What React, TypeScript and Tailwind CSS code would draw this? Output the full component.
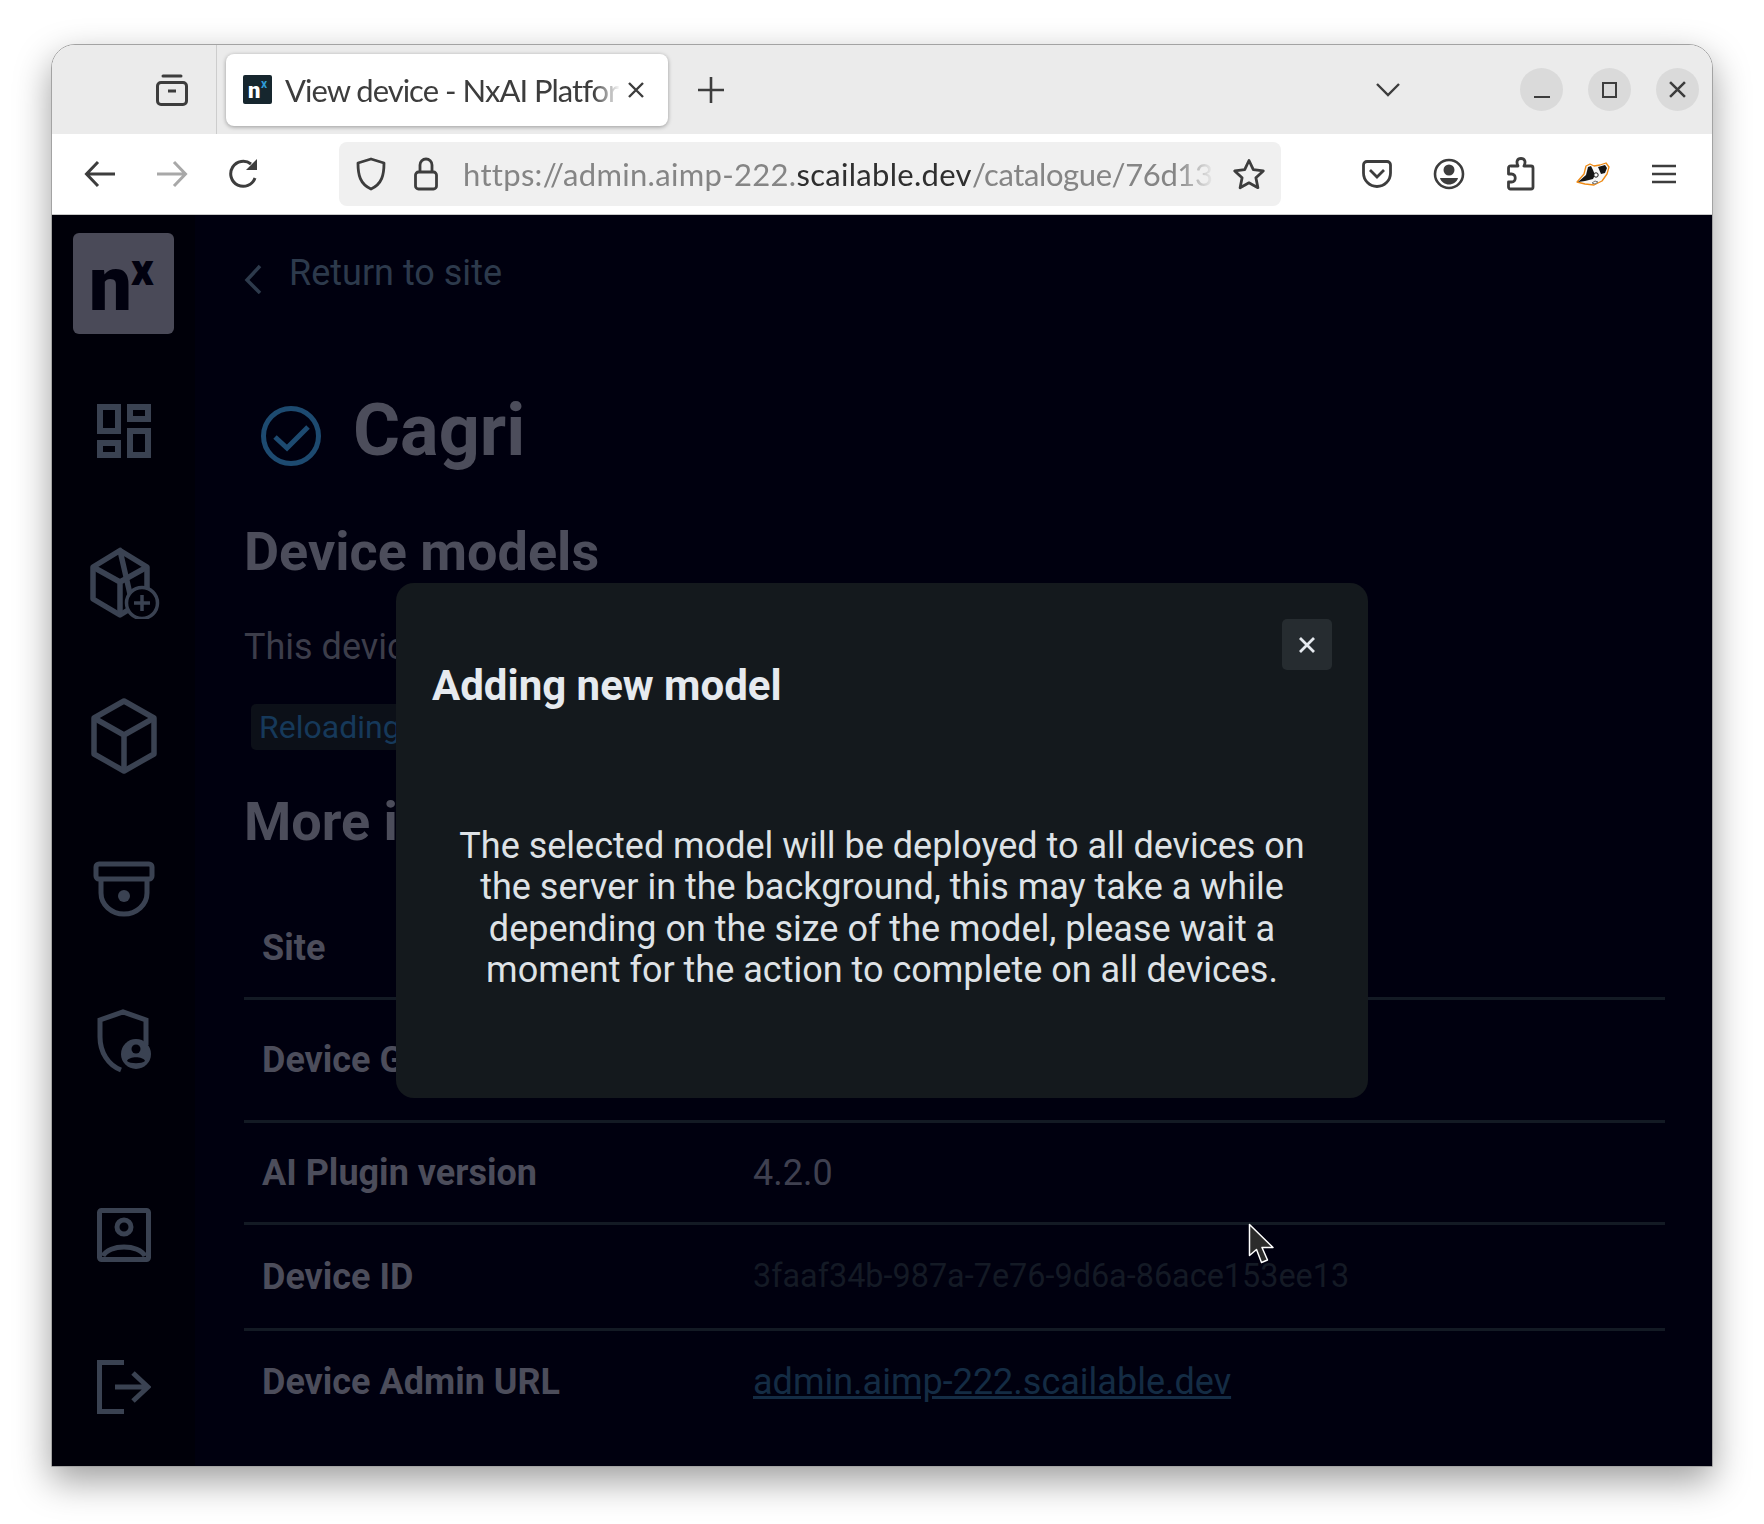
import { MdOutlineDashboard } from "react-icons/md";

const roboto = "font-['Roboto',sans-serif]";
const chrome = "font-['Lato',sans-serif]";

function ToolSlot({ children }: { children: React.ReactNode }) {
	return <div className="flex items-center justify-center w-[72px] h-[64px] shrink-0">{children}</div>;
}

function TitleBar() {
	return (
		<div className="flex items-center h-[89px] shrink-0 bg-[#ebebeb] pr-[13px] text-[#3d3d3d]">
			<div className="flex items-center justify-end w-[165px] h-full shrink-0 border-r border-[#cdcdcd] pr-[27px]">
				<svg width="34" height="34" viewBox="0 0 34 34" fill="none" stroke="currentColor" strokeWidth="3">
					<path d="M8 3h18" strokeLinecap="round" />
					<rect x="2.5" y="9.5" width="29" height="22" rx="3.5" />
					<path d="M13 18h8" />
				</svg>
			</div>
			<div className="flex items-center ml-[9px] w-[442px] h-[72px] shrink-0 rounded-[8px] bg-white shadow-[0_1px_4px_rgba(0,0,0,0.35)] pl-[17px] pr-[23px]">
				<div className="relative w-[29px] h-[29px] shrink-0 rounded-[2px] bg-[#16262e]">
					<span className={`absolute left-[5px] top-[5px] text-[22px] leading-[22px] font-black text-white ${roboto}`}>n</span>
					<span className={`absolute left-[18px] top-[3px] text-[12px] leading-[12px] font-bold text-[#2f9bd8] ${roboto}`}>x</span>
				</div>
				<span className={`ml-[13px] w-[335px] overflow-hidden whitespace-nowrap text-[31px] leading-[40px] tracking-[-1px] text-[#3d3d3d] [mask-image:linear-gradient(to_right,black_92%,transparent)] ${chrome}`}>
					View device - NxAI Platfor
				</span>
				<svg className="ml-auto shrink-0" width="18" height="18" viewBox="0 0 18 18" stroke="currentColor" strokeWidth="2.4">
					<path d="M2 2l14 14M16 2L2 16" />
				</svg>
			</div>
			<div className="flex items-center justify-center ml-[18px] w-[50px] shrink-0">
				<svg width="26" height="26" viewBox="0 0 26 26" stroke="currentColor" strokeWidth="2.6">
					<path d="M13 0v26M0 13h26" />
				</svg>
			</div>
			<svg className="ml-auto mr-[120px] shrink-0" width="24" height="14" viewBox="0 0 24 14" fill="none" stroke="currentColor" strokeWidth="2.4">
				<path d="M1 1l11 11L23 1" />
			</svg>
			<div className="flex items-center gap-[25px] shrink-0">
				<div className="flex items-center justify-center w-[43px] h-[43px] rounded-full bg-[#dadada]">
					<div className="w-[16px] h-[2px] mt-[14px] bg-[#3d3d3d]" />
				</div>
				<div className="flex items-center justify-center w-[43px] h-[43px] rounded-full bg-[#dadada]">
					<div className="w-[15px] h-[16px] border-[2px] border-[#3d3d3d]" />
				</div>
				<div className="flex items-center justify-center w-[43px] h-[43px] rounded-full bg-[#dadada]">
					<svg width="17" height="17" viewBox="0 0 16 16" stroke="currentColor" strokeWidth="2.4">
						<path d="M1 1l14 14M15 1L1 15" />
					</svg>
				</div>
			</div>
		</div>
	);
}

function Badger() {
	return (
		<svg width="34" height="25" viewBox="0 0 34 25">
			<path d="M1 20l7-8 2-8 4-2 4 2 6-1 6-2 3 4-2 7-5 7-8 4-9-1z" fill="#f8f8f8" stroke="#f08a12" strokeWidth="1.3" strokeLinejoin="round" />
			<path d="M2 20l8-7 2-8 3-1 2 4 2 5-2 4-8 2z" fill="#151515" />
			<path d="M22 5l7-2 2 3-2 5-4 1z" fill="#151515" />
			<circle cx="20" cy="13" r="2.2" fill="#fff" stroke="#151515" />
			<path d="M16 21l3-2 3 1-3 2z" fill="none" stroke="#777" strokeWidth="1" />
		</svg>
	);
}

function Toolbar() {
	return (
		<div className="flex items-center h-[81px] shrink-0 bg-white pl-[12px] border-b border-[#c9c9c9] text-[#3d3d3d]">
			<ToolSlot>
				<svg width="32" height="28" viewBox="0 0 32 28" fill="none" stroke="currentColor" strokeWidth="3">
					<path d="M31 14H3M14 2L2.5 14 14 26" />
				</svg>
			</ToolSlot>
			<ToolSlot>
				<svg width="32" height="28" viewBox="0 0 32 28" fill="none" stroke="#a8a8a8" strokeWidth="3">
					<path d="M1 14h28M18 2l11.5 12L18 26" />
				</svg>
			</ToolSlot>
			<ToolSlot>
				<svg width="32" height="32" viewBox="0 0 32 32" fill="none" stroke="currentColor" strokeWidth="3">
					<path d="M27 20a12.5 12.5 0 1 1-4-14" />
					<path d="M29 1v11H18z" fill="currentColor" stroke="none" />
				</svg>
			</ToolSlot>
			<div className="flex items-center ml-[59px] w-[942px] h-[64px] shrink-0 rounded-[8px] bg-[#f0f0f0] pl-[17px] pr-[15px]">
				<svg className="shrink-0" width="30" height="34" viewBox="0 0 30 34" fill="none" stroke="currentColor" strokeWidth="2.8">
					<path d="M15 2l13 4c0 12-2 21-13 26C4 27 2 18 2 6z" strokeLinejoin="round" />
				</svg>
				<svg className="ml-[28px] shrink-0" width="24" height="34" viewBox="0 0 24 34" fill="none" stroke="currentColor" strokeWidth="2.8">
					<path d="M6 15V8a6 6 0 0 1 12 0v7" />
					<rect x="1.5" y="15" width="21" height="17" rx="3" />
				</svg>
				<div className={`ml-[25px] w-[752px] overflow-hidden whitespace-nowrap text-[31px] leading-[40px] tracking-[0.3px] text-[#858585] [mask-image:linear-gradient(to_right,black_95%,transparent)] ${chrome}`}>
					https://admin.aimp-222.<span className="text-[#2f2f2f]">scailable.dev</span><span className="tracking-[-0.4px]">/catalogue/76d13</span>
				</div>
				<svg className="ml-auto shrink-0" width="34" height="32" viewBox="0 0 34 32" fill="none" stroke="currentColor" strokeWidth="2.8">
					<path d="M17 2.5l4.3 9.2 10 1.2-7.4 6.9 2 9.9L17 24.8 8.1 29.7l2-9.9-7.4-6.9 10-1.2z" strokeLinejoin="round" />
				</svg>
			</div>
			<div className="flex items-center ml-[60px]">
				<ToolSlot>
					<svg width="30" height="28" viewBox="0 0 30 28" fill="none" stroke="currentColor" strokeWidth="2.8">
						<path d="M5 1.5h20A3.5 3.5 0 0 1 28.5 5v8a13.5 13.5 0 0 1-27 0V5A3.5 3.5 0 0 1 5 1.5z" />
						<path d="M8 10l7 7 7-7" />
					</svg>
				</ToolSlot>
				<ToolSlot>
					<svg width="32" height="32" viewBox="0 0 32 32" fill="none" stroke="currentColor" strokeWidth="2.6">
						<circle cx="16" cy="16" r="14" />
						<circle cx="16" cy="12" r="5.5" fill="currentColor" stroke="none" />
						<path d="M7 20h18c-1 4-5 6.5-9 6.5S8 24 7 20z" fill="currentColor" stroke="none" />
					</svg>
				</ToolSlot>
				<ToolSlot>
					<svg width="28" height="34" viewBox="0 0 28 34" fill="none" stroke="currentColor" strokeWidth="2.8" strokeLinejoin="round">
						<path d="M4 9h7c-2-4-1-7.5 3-7.5s5 3.5 3 7.5h7a2 2 0 0 1 2 2v19a2 2 0 0 1-2 2H3.5a2 2 0 0 1-2-2v-5h3c5 0 5-8 0-8h-3v-6A2 2 0 0 1 4 9z" />
					</svg>
				</ToolSlot>
				<ToolSlot>
					<Badger />
				</ToolSlot>
				<div className="flex items-center justify-center w-[70px] h-[64px] shrink-0">
					<svg width="24" height="20" viewBox="0 0 24 20" stroke="currentColor" strokeWidth="2.4">
						<path d="M0 2h24M0 10h24M0 18h24" />
					</svg>
				</div>
			</div>
		</div>
	);
}

function CubeIcon() {
	return (
		<svg width="72" height="72" viewBox="0 0 72 72" fill="none" stroke="#3a4252" strokeWidth="5.5" strokeLinejoin="round">
			<path d="M32 3.500L59 20v24M45 60L32 68 5 52V20L32 3.500z" />
			<path d="M5 20l27 15 27-15M32 35v33" />
			<circle cx="54" cy="56" r="15.500" fill="#000009" strokeWidth="3.500" />
			<path d="M54 48v16M46 56h16" strokeWidth="3.500" />
		</svg>
	);
}

function Sidebar() {
	return (
		<aside className="flex flex-col items-center w-[143px] shrink-0 bg-[#000009] pt-[18px] text-[#3a4252]">
			<div className="relative w-[101px] h-[101px] shrink-0 rounded-[6px] bg-[#4a4a58]">
				<span className={`absolute left-[16px] top-[13px] text-[76px] leading-[76px] font-black text-[#01010f] ${roboto}`}>n</span>
				<span className={`absolute left-[58px] top-[15px] text-[44px] leading-[44px] font-black text-[#01010f] ${roboto}`}>x</span>
			</div>
			<MdOutlineDashboard className="mt-[61px] shrink-0" size={72} />
			<div className="mt-[80px]">
				<CubeIcon />
			</div>
			<svg className="mt-[79px] shrink-0" width="68" height="76" viewBox="0 0 68 76" fill="none" stroke="currentColor" strokeWidth="5.5" strokeLinejoin="round">
				<path d="M34 3l30 17v36L34 73 4 56V20z" />
				<path d="M4 20l30 17 30-17M34 37v36" />
			</svg>
			<svg className="mt-[87px] shrink-0" width="62" height="56" viewBox="0 0 62 56" fill="none" stroke="currentColor" strokeWidth="5">
				<rect x="3" y="3" width="56" height="15" rx="3" />
				<path d="M8 18v14a23 21 0 0 0 46 0V18" />
				<circle cx="31" cy="35" r="6" fill="currentColor" stroke="none" />
			</svg>
			<svg className="mt-[92px] shrink-0" width="56" height="64" viewBox="0 0 56 64" fill="none">
				<path d="M50 36V11L27 3 4 11v17c0 15 8 28 21 33" stroke="currentColor" strokeWidth="5" />
				<circle cx="40" cy="45" r="15" fill="currentColor" />
				<circle cx="40" cy="40" r="4.500" fill="#000009" />
				<path d="M31 52c2-5 16-5 18 0-3 3-15 3-18 0z" fill="#000009" />
			</svg>
			<svg className="mt-[135px] shrink-0" width="54" height="54" viewBox="0 0 54 54" fill="none" stroke="currentColor" strokeWidth="5" strokeLinejoin="round">
				<rect x="2.500" y="2.500" width="49" height="49" rx="2" />
				<circle cx="27" cy="19" r="7" />
				<path d="M6 48c6-12 36-12 42 0" />
			</svg>
			<svg className="mt-[98px] shrink-0" width="54" height="54" viewBox="0 0 54 54" fill="none" stroke="currentColor" strokeWidth="5">
				<path d="M27 2.500H2.500v49H27" />
				<path d="M18 27h33M36 13l15 14-15 14" />
			</svg>
		</aside>
	);
}

function InfoRow({
	label,
	height,
	children,
	last,
}: {
	label: string;
	height: string;
	children?: React.ReactNode;
	last?: boolean;
}) {
	return (
		<div className={`flex items-center pl-[18px] ${height} ${last ? "" : "border-b-[3px] border-[#131a24]"}`}>
			<span className="w-[491px] shrink-0 text-[36px] font-bold text-[#4c4d5b]">{label}</span>
			{children}
		</div>
	);
}

function Modal() {
	return (
		<div className={`absolute left-[344px] top-[368px] w-[972px] h-[515px] rounded-[18px] bg-[#14191d] px-[36px] pt-[80px] ${roboto}`}>
			<button className="absolute right-[36px] top-[36px] flex items-center justify-center w-[50px] h-[51px] rounded-[5px] bg-[#262c30] text-[#e6eaef]">
				<svg width="18" height="18" viewBox="0 0 18 18" stroke="currentColor" strokeWidth="2.8">
					<path d="M2 2l14 14M16 2L2 16" />
				</svg>
			</button>
			<h2 className="text-[42px] leading-[46px] font-bold text-[#e6eaef]">Adding new model</h2>
			<p className="mt-[117px] text-center text-[36px] leading-[41.4px] text-[#dee2e6]">
				The selected model will be deployed to all devices on the server in the background, this may take a while depending on the size of the model, please wait a moment for the action to complete on all devices.
			</p>
		</div>
	);
}

export default function App() {
	return (
		<div className="w-[1764px] h-[1524px] overflow-hidden bg-white pl-[51px] pt-[44px]">
			<div className="relative flex flex-col w-[1662px] h-[1423px] overflow-hidden rounded-t-[24px] border border-[#a3a3a3] shadow-[0_14px_36px_rgba(0,0,0,0.38)]">
				<TitleBar />
				<Toolbar />
				<div className={`relative flex flex-1 bg-[#00000f] ${roboto}`}>
					<Sidebar />
					<main className="flex-1 pl-[49px] pr-[47px]">
						<div className="flex items-center h-[60px] mt-[28px] text-[#2d3a4c]">
							<svg className="mt-[12px]" width="18" height="30" viewBox="0 0 18 30" fill="none" stroke="currentColor" strokeWidth="3.5">
								<path d="M16 2L3 16l13 13" />
							</svg>
							<span className="ml-[27px] text-[36px]">Return to site</span>
						</div>
						<div className="flex items-center mt-[86px] h-[84px] pl-[17px]">
							<svg className="mt-[10px]" width="60" height="60" viewBox="0 0 60 60" fill="none" stroke="#1d4a70" strokeWidth="5">
								<circle cx="30" cy="30" r="27.5" />
								<path d="M14 31l12 11 21-21" />
							</svg>
							<h1 className="ml-[32px] text-[72px] leading-[84px] font-bold text-[#4c4d5b]">Cagri</h1>
						</div>
						<h2 className="mt-[47px] text-[54px] leading-[64px] font-bold text-[#4c4d5b]">Device models</h2>
						<p className="mt-[42px] text-[36px] leading-[42px] text-[#3c3d4a]">This device has no models</p>
						<div className="inline-block mt-[36px] ml-[7px] h-[46px] rounded-[5px] bg-[#0c1018] px-[8px] text-[32px] leading-[46px] text-[#16395a]">
							Reloading
						</div>
						<h2 className="mt-[40px] text-[54px] leading-[64px] font-bold text-[#4c4d5b]">More information</h2>
						<div className="mt-[39px]">
							<InfoRow label="Site" height="h-[107px] pt-[6px]" />
							<InfoRow label="Device Group" height="h-[123px]" />
							<InfoRow label="AI Plugin version" height="h-[102px]">
								<span className="text-[36px] text-[#3f4050]">4.2.0</span>
							</InfoRow>
							<InfoRow label="Device ID" height="h-[106px]">
								<span className="text-[32.4px] text-[#141a25]">3faaf34b-987a-7e76-9d6a-86ace153ee13</span>
							</InfoRow>
							<InfoRow label="Device Admin URL" height="h-[101px]" last>
								<a className="text-[36px] text-[#142c44] underline" href="#">admin.aimp-222.scailable.dev</a>
							</InfoRow>
						</div>
					</main>
					<Modal />
				</div>
				<svg className="absolute left-[1196px] top-[1178px]" width="28" height="42" viewBox="0 0 28 42">
					<path d="M1.5 1.5v31l7-6 5 13 6-2.5-5.5-12.5h11z" fill="#2b2b2b" stroke="#fff" strokeWidth="1.5" strokeLinejoin="round" />
				</svg>
			</div>
		</div>
	);
}
